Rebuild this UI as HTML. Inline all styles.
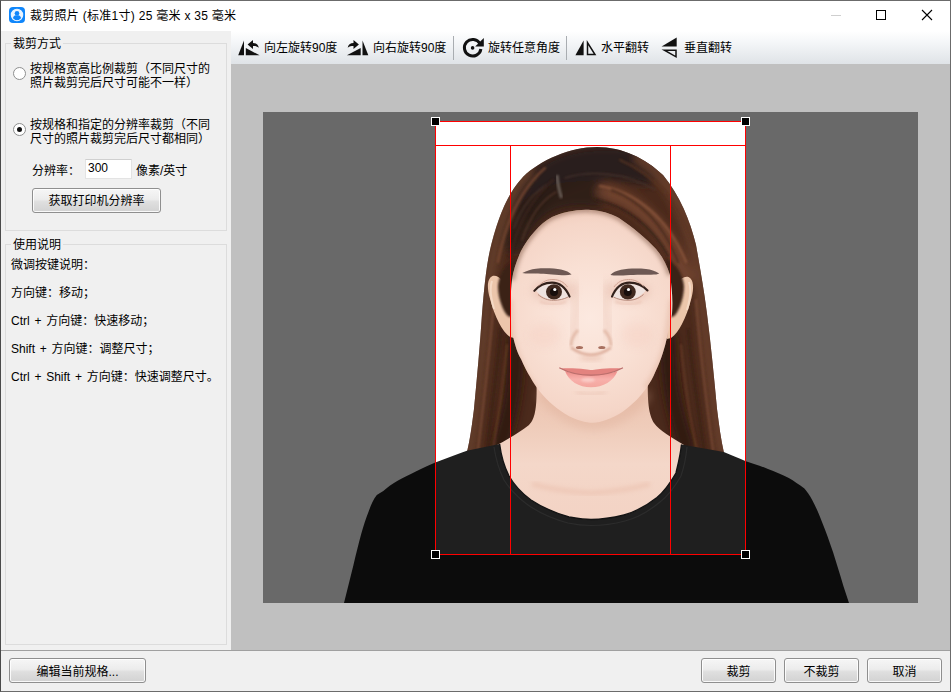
<!DOCTYPE html>
<html lang="zh-CN">
<head>
<meta charset="utf-8">
<title>裁剪照片</title>
<style>
*{box-sizing:border-box;margin:0;padding:0}
html,body{width:951px;height:692px;overflow:hidden;background:#f0f0f0}
body{position:relative;font-family:"Liberation Sans","Noto Sans CJK SC",sans-serif;font-size:12px;color:#000;line-height:14px}
.abs{position:absolute}
#win{position:absolute;left:0;top:0;width:951px;height:692px;border:1px solid #6b6b6b;border-left-color:#4a4a4a;pointer-events:none;z-index:50}
#title{position:absolute;left:1px;top:1px;width:949px;height:30px;background:#fff}
#title .t{position:absolute;left:29px;top:7px;font-size:12px;line-height:16px;white-space:nowrap;letter-spacing:0.28px}
#left{position:absolute;left:1px;top:31px;width:230px;height:619px;background:#f0f0f0}
.gb{position:absolute;border:1px solid #dcdcdc}
.lg{position:absolute;background:#f0f0f0;padding:0 2px;white-space:nowrap;line-height:14px;margin-top:1px}
.radio{position:absolute;width:13px;height:13px;border-radius:50%;border:1px solid #8e8f8f;background:#fff}
.radio.on::after{content:"";position:absolute;left:3px;top:3px;width:5px;height:5px;border-radius:50%;background:#111}
.lbl{position:absolute;white-space:nowrap;line-height:14px;margin-top:1px}
.btn{position:absolute;border:1px solid #8f8f8f;border-radius:3px;background:linear-gradient(#f6f6f6 0%,#ececec 45%,#dfdfdf 55%,#d2d2d2 100%);text-align:center;white-space:nowrap;padding-top:1px;box-shadow:inset 0 0 0 1px rgba(255,255,255,.85)}
#tb{position:absolute;left:231px;top:31px;width:719px;height:33px;background:linear-gradient(#ffffff 0%,#f4f6f8 35%,#dfe3e7 100%)}
#tb .ti{position:absolute;top:10px;line-height:14px;white-space:nowrap}
#tb .sep{position:absolute;top:5px;width:1px;height:24px;background:#a9adb1}
#canvas{position:absolute;left:231px;top:64px;width:719px;height:586px;background:#c0c0c0}
#bottom .btn{padding-top:2px}
#bottom{position:absolute;left:1px;top:650px;width:949px;height:41px;background:#f0f0f0;border-top:1px solid #a0a0a0}
</style>
</head>
<body>
<div id="title">
  <svg class="abs" style="left:8px;top:6px" width="16" height="16" viewBox="0 0 16 16">
    <rect x="0" y="0" width="16" height="16" rx="4" fill="#0f86fb"/>
    <circle cx="8" cy="8" r="5.700" fill="#eaf4ff"/>
    <circle cx="8" cy="6.300" r="2.300" fill="#1186fb"/>
    <path d="M3.900 11.200C4.300 8.700 6 8.300 8 8.300C10 8.300 11.700 8.700 12.100 11.200C11 12.600 9.600 13.200 8 13.200C6.400 13.200 5 12.600 3.900 11.200Z" fill="#1186fb"/>
    <circle cx="8" cy="8" r="5.700" fill="none" stroke="#eaf4ff" stroke-width="1.100"/>
  </svg>
  <div class="t">裁剪照片 (标准1寸) 25 毫米 x 35 毫米</div>
  <svg class="abs" style="left:820px;top:0" width="130" height="30" viewBox="0 0 130 30">
    <path d="M10 14.5H20" stroke="#cfcfcf" stroke-width="1"/>
    <rect x="55.5" y="9.5" width="9" height="9" fill="none" stroke="#000" stroke-width="1"/>
    <path d="M101 9L111 19M111 9L101 19" stroke="#000" stroke-width="1.1"/>
  </svg>
</div>

<div id="left">
  <div class="gb" style="left:4px;top:12px;width:222px;height:188px"></div>
  <div class="lg" style="left:10px;top:5px">裁剪方式</div>
  <div class="radio" style="left:12px;top:36px"></div>
  <div class="lbl" style="left:29px;top:30px">按规格宽高比例裁剪（不同尺寸的<br>照片裁剪完后尺寸可能不一样）</div>
  <div class="radio on" style="left:12px;top:92px"></div>
  <div class="lbl" style="left:29px;top:86px">按规格和指定的分辨率裁剪（不同<br>尺寸的照片裁剪完后尺寸都相同）</div>
  <div class="lbl" style="left:31px;top:132px">分辨率：</div>
  <div class="abs" style="left:84px;top:128px;width:47px;height:20px;background:#fff;border:1px solid #e3e3e3;border-top-color:#d0d0d0"></div>
  <div class="lbl" style="left:87px;top:129px">300</div>
  <div class="lbl" style="left:135px;top:132px">像素/英寸</div>
  <div class="btn" style="left:31px;top:157px;width:129px;height:25px;line-height:23px">获取打印机分辨率</div>

  <div class="gb" style="left:4px;top:213px;width:222px;height:401px"></div>
  <div class="lg" style="left:10px;top:206px">使用说明</div>
  <div class="lbl" style="left:10px;top:226px">微调按键说明：</div>
  <div class="lbl" style="left:10px;top:254px">方向键：移动；</div>
  <div class="lbl" style="word-spacing:1.4px;left:10px;top:282px">Ctrl + 方向键：快速移动；</div>
  <div class="lbl" style="word-spacing:1.4px;left:10px;top:310px">Shift + 方向键：调整尺寸；</div>
  <div class="lbl" style="word-spacing:1.4px;left:10px;top:338px">Ctrl + Shift + 方向键：快速调整尺寸。</div>
</div>

<div id="tb">
  <!-- icons -->
  <svg class="abs" style="left:0;top:0" width="719" height="33" viewBox="231 31 719 33">
    <g fill="#111">
      <path d="M244 40.4L244 55.3L238.2 55.3Z"/>
      <path d="M245.8 48L245.8 55.3L259.6 55.3Z"/>
      <path d="M247.6 44.5L253 40.1L253 43C256.200 43 258.400 44.800 258.800 47.800C257 46.200 255.200 46 253 46L253 48.900Z"/>
    </g>
    <g fill="#111" transform="translate(606.5 0) scale(-1 1)">
      <path d="M244 40.4L244 55.3L238.2 55.3Z"/>
      <path d="M245.8 48L245.8 55.3L259.6 55.3Z"/>
      <path d="M247.6 44.5L253 40.1L253 43C256.200 43 258.400 44.800 258.800 47.800C257 46.200 255.200 46 253 46L253 48.900Z"/>
    </g>
    <g>
      <path d="M479.900 43.600A8.300 8.300 0 1 0 480.900 49" fill="none" stroke="#111" stroke-width="3"/>
      <path d="M483.800 38L483.800 46.600L475.200 46.600Z" fill="#111"/>
      <circle cx="472.600" cy="47.900" r="1.800" fill="#111"/>
    </g>
    <g>
      <path d="M583.600 40.600L583.600 55.300L575.400 55.300Z" fill="#111"/>
      <path d="M587.500 42.600L587.500 54.600L595 54.600Z" fill="none" stroke="#111" stroke-width="1.500"/>
    </g>
    <g>
      <path d="M676.700 37.400L676.700 46.400L661.600 46.400Z" fill="#111"/>
      <path d="M676 50.200L676 56.800L664.400 50.200Z" fill="none" stroke="#111" stroke-width="1.500"/>
    </g>
  </svg>
  <div class="ti" style="left:33px">向左旋转90度</div>
  <div class="ti" style="left:142px">向右旋转90度</div>
  <div class="sep" style="left:222px"></div>
  <div class="ti" style="left:257px">旋转任意角度</div>
  <div class="sep" style="left:335px"></div>
  <div class="ti" style="left:370px">水平翻转</div>
  <div class="ti" style="left:453px">垂直翻转</div>
</div>

<div id="canvas"></div>
<!--PHOTO_START-->
<svg id="photo" class="abs" style="left:263px;top:112px" width="655" height="491" viewBox="263 112 655 491">
  <defs>
    <radialGradient id="gSkin" cx="590" cy="318" r="118" gradientUnits="userSpaceOnUse">
      <stop offset="0" stop-color="#fce9e0"/>
      <stop offset="0.45" stop-color="#f9e0d4"/>
      <stop offset="0.8" stop-color="#f5d6c8"/>
      <stop offset="1" stop-color="#efc9b8"/>
    </radialGradient>
    <linearGradient id="gNeck" x1="0" y1="396" x2="0" y2="520" gradientUnits="userSpaceOnUse">
      <stop offset="0" stop-color="#ecc5b2"/>
      <stop offset="0.25" stop-color="#efccba"/>
      <stop offset="0.55" stop-color="#f4d7c9"/>
      <stop offset="1" stop-color="#f3d3c4"/>
    </linearGradient>
    <linearGradient id="gHair" x1="470" y1="0" x2="724" y2="0" gradientUnits="userSpaceOnUse">
      <stop offset="0" stop-color="#6b3d2a"/>
      <stop offset="0.1" stop-color="#5a3323"/>
      <stop offset="0.22" stop-color="#3a2319"/>
      <stop offset="0.5" stop-color="#2e1d17"/>
      <stop offset="0.78" stop-color="#3f2519"/>
      <stop offset="0.9" stop-color="#5e3524"/>
      <stop offset="1" stop-color="#6e3f2b"/>
    </linearGradient>
    <radialGradient id="gTop" cx="575" cy="190" r="75" gradientUnits="userSpaceOnUse" gradientTransform="translate(575 190) scale(1 0.62) translate(-575 -190)">
      <stop offset="0" stop-color="#2a2220" stop-opacity="1"/>
      <stop offset="0.6" stop-color="#2c1f1b" stop-opacity="0.85"/>
      <stop offset="1" stop-color="#3a2319" stop-opacity="0"/>
    </radialGradient>
    <linearGradient id="gLip" x1="0" y1="372" x2="0" y2="388" gradientUnits="userSpaceOnUse">
      <stop offset="0" stop-color="#ee908c"/>
      <stop offset="0.45" stop-color="#f8b0ab"/>
      <stop offset="1" stop-color="#f3a59d"/>
    </linearGradient>
    <filter id="b05" x="-20%" y="-20%" width="140%" height="140%"><feGaussianBlur stdDeviation="0.5"/></filter>
    <filter id="b1" x="-20%" y="-20%" width="140%" height="140%"><feGaussianBlur stdDeviation="1"/></filter>
    <filter id="b2" x="-30%" y="-30%" width="160%" height="160%"><feGaussianBlur stdDeviation="2"/></filter>
    <filter id="b4" x="-40%" y="-40%" width="180%" height="180%"><feGaussianBlur stdDeviation="4"/></filter>
    <clipPath id="cHair"><path d="M597 147C570 147 540 160 523 177C505 196 496 225 490 250C486 268 484 290 482 314C480 345 477 377 474 409C472 425 470 440 467 452L500 470L690 470L724 453C721 440 719 425 717 409C714 377 711 345 707 314C704 290 700 268 696 245C690 220 680 196 663 175C645 158 622 147 597 147Z"/></clipPath>
    <clipPath id="cFace"><path id="pFace" d="M591 210C578 209 563 212 552 217C540 223 528 238 521 251C516 262 513 272 512 280C510.500 292 510.500 305 510.500 314L513 336C515 346 518 354 521 359C524 366 527 372 530.500 377.500C533 382 535 385 538 389C541 393 545 398 549.500 402C554 406 559 410 564.500 413.500C570 417 576 419.500 581.500 421C585 422 589 422.800 593 422.800C597 422.800 602 421.500 606 420C612 418 618 415 623 411.500C628 408 632 404 636.500 400C640 396.500 643 392.500 646 388.500C650 383 653 377.500 655.500 371.500C658.500 365 661 359 663 352.500C664.500 347.500 666 342.500 667 337.500L672 314C673 300 672 288 670 275C667 265 662 256 656 249C646 238 632 227 619 218C610 213 600 210.500 591 210Z"/></clipPath>
  </defs>
  <rect x="263" y="112" width="655" height="491" fill="#ffffff"/>

  <!-- hair back -->
  <g filter="url(#b05)">
    <path d="M597 147C570 147 540 160 523 177C505 196 496 225 490 250C486 268 484 290 482 314C480 345 477 377 474 409C472 425 470 440 467 452L500 470L690 470L724 453C721 440 719 425 717 409C714 377 711 345 707 314C704 290 700 268 696 245C690 220 680 196 663 175C645 158 622 147 597 147Z" fill="#4b2b1f"/>
  </g>
  <g clip-path="url(#cHair)">
    <g filter="url(#b4)" fill="none" stroke-linecap="round">
      <!-- dark crown -->
      <path d="M528 205C545 168 590 156 645 168" stroke="#271d1b" stroke-width="34" opacity="0.95"/>
      <path d="M515 240C525 205 555 190 595 195" stroke="#2b1d19" stroke-width="26" opacity="0.9"/>
      <!-- outer brown bands -->
      <path d="M528 172C505 195 494 240 488 290C484 340 478 400 470 452" stroke="#67402c" stroke-width="11" opacity="0.9"/>
      <path d="M640 158C672 178 692 225 700 280C706 335 712 400 722 452" stroke="#6a412d" stroke-width="12" opacity="0.9"/>
      <path d="M604 192C638 200 668 230 686 278" stroke="#7a4a33" stroke-width="15" opacity="0.8"/>
      <!-- inner dark near neck -->
      <path d="M516 340C516 380 512 410 500 446" stroke="#2c1812" stroke-width="16" opacity="0.9"/>
      <path d="M668 340C668 380 674 410 686 446" stroke="#2c1812" stroke-width="16" opacity="0.9"/>
    </g>
    <g filter="url(#b1)" fill="none" stroke-linecap="round" opacity="0.8">
      <path d="M494 300C490 350 484 400 478 450" stroke="#7f4e37" stroke-width="2"/>
      <path d="M501 330C497 370 492 410 487 450" stroke="#3b2218" stroke-width="2.500"/>
      <path d="M507 345C503 385 498 420 493 450" stroke="#6b3f2b" stroke-width="2"/>
      <path d="M696 300C700 350 706 400 713 450" stroke="#7f4e37" stroke-width="2"/>
      <path d="M688 330C692 370 698 410 704 450" stroke="#3b2218" stroke-width="2.500"/>
      <path d="M681 345C685 385 690 420 697 450" stroke="#6b3f2b" stroke-width="2"/>
      <path d="M600 186C636 192 668 218 686 262" stroke="#8b563c" stroke-width="2.500"/>
      <path d="M596 200C626 206 652 226 668 256" stroke="#2e1d17" stroke-width="2"/>
      <path d="M565 178C590 170 625 172 655 190" stroke="#4a352e" stroke-width="1.500"/>
      <path d="M552 182C535 190 522 206 514 228" stroke="#4a352e" stroke-width="1.500"/>
      <path d="M556 192C542 200 530 216 522 240" stroke="#57392c" stroke-width="1.500"/>
      <path d="M612 190C640 200 664 225 678 262" stroke="#4a2b1f" stroke-width="2.500"/>
      <path d="M620 160C655 175 680 205 694 245" stroke="#5a3423" stroke-width="2"/>
      <path d="M545 168C520 190 505 225 498 262" stroke="#7b4a33" stroke-width="2.500"/>
      <path d="M553 180C530 200 516 228 510 258" stroke="#3a241c" stroke-width="2.500"/>
    </g>
    <!-- parting scalp -->
    <path d="M557 175C557.500 183 559 190 561.500 198" stroke="#7d726a" stroke-width="3.200" fill="none" filter="url(#b1)" opacity="0.7"/>
  </g>

  <!-- neck -->
  <path d="M536 370C538 408 535 419 529 425C519 433 506 440 497 445L497 480L520 505L560 522L590 526L625 522L662 505L684 480L684 445C672 438 659 430 654 423C649 414 647 405 648 370Z" fill="url(#gNeck)"/>
  <!-- chin shadow on neck -->
  <path d="M538 398C552 418 575 430 594 430C613 430 636 418 650 398L650 392L538 392Z" fill="#dcab94" opacity="0.35" filter="url(#b4)"/>
  <!-- collarbone hint -->
  <path d="M532 484C550 489 572 492 591 493C610 492 632 489 650 484" fill="none" stroke="#e9bca9" stroke-width="5" filter="url(#b2)" opacity="0.5"/>

  <!-- shirt -->
  <path d="M468 450.500L470.400 449.500C458 454 447 458 435.300 462.500C428 465.500 422 468.500 415.800 471.600C409 475 403 478 397.600 480.700C392 484 387 487.500 383.300 491C381 492.500 379 493.500 376.800 495C373 500 371 505 369 510.600C366 518 363.500 526 361.200 534C358.500 544 356 554 353.400 565.200L344 603L849 603L843.400 586C840 574 836 562 833 552C829.500 542 826 532 822.600 523.600C819 514 816 507 812.200 500C810 495.500 807 491.500 804.400 488.500C799 484.500 794 481 788.800 478C782 474.500 775 471.800 768 469C761 466 753 463.500 745.900 461.200C738 458 731 455 723.800 452L681.500 444.500C680 458 677 468 676 473C668 487 660 495 657 497.500C645 507 635 512 624 515C612 518 600 519.500 591 519.500C583 519.500 575 518 569 517C555 513 540 506 531 500C520 492 513 483 509 476C504 466 501 455 499.600 444Z" fill="#1f1f1f"/>
  <!-- collar band -->
  <path d="M494 447C496 460 499 470 504 480C509 488 517 497 528 505C538 512 553 519 568 523C575 524.500 583 525.500 591 525.500C600 525.500 612 524.500 625 521C637 518 648 512 660 502C664 499 673 490 681 476C683 470 686 458 687 447" fill="none" stroke="#2c2c2c" stroke-width="1.2"/>
  <path d="M499.600 444C501 455 504 466 509 476C513 483 520 492 531 500C540 506 555 513 569 517C575 518 583 519.500 591 519.500C600 519.500 612 518 624 515C635 512 645 507 657 497.500C660 495 668 487 676 473C677 468 680 458 681.500 444.500" fill="none" stroke="#141414" stroke-width="1.4"/>

  <!-- ears -->
  <path d="M513 300C509 286 499 273.500 492.500 276C487 278.500 487 288 489.500 297C492 307 495.500 316 499 323C502 329 506 334 510 337L514 338Z" fill="#ecc6ab"/>
  <path d="M492 281C489.500 288 491 299 494 309" fill="none" stroke="#f6dcc8" stroke-width="2" filter="url(#b05)" opacity="0.9"/>
  <path d="M668.500 300C672.500 286 682 274.500 688.500 277C694 279.500 694 289 691.500 298C689 308 685.500 317 682 324C679 330 675 335 671 338L667 339Z" fill="#ecc6ab"/>
  <path d="M689 282C691.500 289 690 300 687 310" fill="none" stroke="#f6dcc8" stroke-width="2" filter="url(#b05)" opacity="0.9"/>
  <!-- sideburn hair over ear -->
  <path d="M516 258C506 264 499 274 498 286C498 296 501 306 506 314C509 318 512 318 513 314L514 290Z" fill="#3a2219" filter="url(#b1)"/>
  <path d="M666 258C676 264 683 274 684 286C684 296 681 306 676 314C673 318 670 318 669 314L668 290Z" fill="#3a2219" filter="url(#b1)"/>

  <!-- face -->
  <g filter="url(#b05)"><use href="#pFace" fill="url(#gSkin)"/></g>
  <g clip-path="url(#cFace)">
    <!-- forehead hairline soft shadow -->
    <path d="M591 210C578 209 563 212 552 217C540 223 528 238 521 251C516 262 513 272 512 280" fill="none" stroke="#7a5443" stroke-width="5" opacity="0.55" filter="url(#b2)"/>
    <path d="M591 210C600 210.500 610 213 619 218C632 227 646 238 656 249C662 256 667 265 670 275" fill="none" stroke="#7a5443" stroke-width="5" opacity="0.55" filter="url(#b2)"/>
    <!-- side face shading -->
    <path d="M510 300L512 336C516 356 524 374 536 390" fill="none" stroke="#e0b09a" stroke-width="6" opacity="0.4" filter="url(#b2)"/>
    <path d="M672 300L667 337C664 356 656 374 646 388" fill="none" stroke="#e0b09a" stroke-width="6" opacity="0.4" filter="url(#b2)"/>
    <!-- nose highlight & shadow -->
    <path d="M590.500 285L590.500 342" stroke="#fff3ec" stroke-width="6" opacity="0.6" filter="url(#b4)"/>
    <path d="M571 346C571 338 575 333 578 330" fill="none" stroke="#dcae9a" stroke-width="3" opacity="0.75" filter="url(#b1)"/>
    <path d="M611 346C611 338 607 333 604 330" fill="none" stroke="#dcae9a" stroke-width="3" opacity="0.75" filter="url(#b1)"/>
    <path d="M571 347.500C577 352 584 354.500 591 355C598 354.500 605 352 611 347.500" fill="none" stroke="#d49f8a" stroke-width="2.400" opacity="0.8" filter="url(#b1)"/>
    <ellipse cx="591" cy="358" rx="12" ry="3" fill="#e8bfae" opacity="0.6" filter="url(#b2)"/>
    <ellipse cx="579.500" cy="347.500" rx="3.600" ry="1.600" fill="#a8705f" filter="url(#b05)"/>
    <ellipse cx="601.800" cy="347.500" rx="3.600" ry="1.600" fill="#a8705f" filter="url(#b05)"/>
    <!-- eye sockets -->
    <ellipse cx="553" cy="291" rx="21" ry="11" fill="#e3b6a5" opacity="0.55" filter="url(#b4)"/>
    <ellipse cx="629" cy="291" rx="21" ry="11" fill="#e3b6a5" opacity="0.55" filter="url(#b4)"/>
    <path d="M575 282C578 300 577 320 572 338" fill="none" stroke="#e6bcab" stroke-width="6" opacity="0.5" filter="url(#b4)"/>
    <path d="M607 282C604 300 605 320 610 338" fill="none" stroke="#e6bcab" stroke-width="6" opacity="0.5" filter="url(#b4)"/>
    <ellipse cx="545" cy="335" rx="16" ry="12" fill="#f4c9bc" opacity="0.3" filter="url(#b4)"/>
    <ellipse cx="637" cy="335" rx="16" ry="12" fill="#f4c9bc" opacity="0.3" filter="url(#b4)"/>
    <!-- chin under-lip shadow -->
    <path d="M576 392C584 395 598 395 606 392" fill="none" stroke="#e9c1b1" stroke-width="3" opacity="0.6" filter="url(#b2)"/>
  </g>

  <!-- eyebrows -->
  <g fill="#604c47" filter="url(#b05)" opacity="0.9">
    <path d="M522.300 273C527 270.500 531 269.200 536 268.700C545 268 555 268.400 561 269.500C566 270.600 569.500 272.300 571.600 274.600C566 275.800 560 275 552 274.500C545 274 536 273.600 531 273.600C527 273.600 524 273.600 522.300 273Z"/>
    <path d="M659.200 273.600C655 270.800 651 269.600 646 269C638 268.200 628 268.400 621 269.700C616 270.700 612.500 272.600 610.400 275C616 276 622 275.300 630 274.900C637 274.600 646 274.600 651 274.700C655 274.700 658 274.500 659.200 273.600Z"/>
  </g>

  <!-- eyes -->
  <g>
    <!-- left eye -->
    <path d="M536 290.500C540 286 546 283.800 552 283.800C559 283.800 565 288 569 296.500C564 299 558 299.800 553 299.600C546 299.200 540 296 536 290.500Z" fill="#efe3df"/>
    <ellipse cx="554" cy="291.800" rx="8" ry="7.600" fill="#40291f"/>
    <ellipse cx="554" cy="292" rx="4" ry="3.900" fill="#170e0c"/>
    <path d="M534.300 290.800C539 285 546 282.600 552 282.600C559.500 282.600 565.500 287 569.600 296.600" fill="none" stroke="#33211b" stroke-width="2.100" stroke-linecap="round" filter="url(#b05)"/>
    <path d="M538 294.500C543 298.800 548 300.300 553.500 300.300C559 300.300 564 299.200 568 297" fill="none" stroke="#a87a6b" stroke-width="1" opacity="0.8" filter="url(#b05)"/>
    <circle cx="554.800" cy="289.500" r="1.600" fill="#ffffff"/>
    <!-- right eye -->
    <path d="M646 290.300C641.500 286 635.500 283.800 629.500 283.800C622.500 283.800 616.500 288 612.500 296.500C617.500 299 623.500 299.800 628.500 299.600C635.500 299.200 641.500 296 646 290.300Z" fill="#efe3df"/>
    <ellipse cx="627.800" cy="291.800" rx="8" ry="7.600" fill="#40291f"/>
    <ellipse cx="627.800" cy="292" rx="4" ry="3.900" fill="#170e0c"/>
    <path d="M647.500 290.500C642.500 285 635.500 282.600 629.500 282.600C622 282.600 616 287 612 296.600" fill="none" stroke="#33211b" stroke-width="2.100" stroke-linecap="round" filter="url(#b05)"/>
    <path d="M643.500 294.500C638.500 298.800 633.500 300.300 628 300.300C622.500 300.300 617.500 299.200 613.500 297" fill="none" stroke="#a87a6b" stroke-width="1" opacity="0.8" filter="url(#b05)"/>
    <circle cx="628.500" cy="289.500" r="1.600" fill="#ffffff"/>
    <!-- upper lid crease -->
    <path d="M538 286.500C543 281 548 279.500 553 279.500C559 279.500 564 282 567.500 287" fill="none" stroke="#c79786" stroke-width="1" opacity="0.8" filter="url(#b05)"/>
    <path d="M643.500 286.500C638.500 281 633.500 279.500 628.500 279.500C622.500 279.500 617.500 282 614 287" fill="none" stroke="#c79786" stroke-width="1" opacity="0.8" filter="url(#b05)"/>
    <!-- under-eye -->
    <path d="M540 301.500C546 305 560 305 566 301.500" fill="none" stroke="#e9c0b0" stroke-width="2" opacity="0.7" filter="url(#b1)"/>
    <path d="M641.500 301.500C635.500 305 621.500 305 615.500 301.500" fill="none" stroke="#e9c0b0" stroke-width="2" opacity="0.7" filter="url(#b1)"/>
  </g>

  <!-- mouth -->
  <g>
    <path d="M565 371C575 375.500 607 375.500 617.500 371C614 381 603 387.300 591 387.300C579 387.300 568.500 381 565 371Z" fill="url(#gLip)" filter="url(#b05)"/>
    <path d="M561 368.600C568 368 578 368.500 585 369.300C588 369.700 590 370 591.500 370C593 370 595 369.700 598 369.300C605 368.500 614 368 621.500 368.600C613 373.300 601 375.800 591 375.800C581 375.800 569.500 373.300 561 368.600Z" fill="#e3837f" filter="url(#b05)"/>
    <path d="M559.800 368C569 373 580 375.200 591 375.200C602 375.200 613 373 622.500 368" fill="none" stroke="#bb6f6d" stroke-width="1.300" stroke-linecap="round" filter="url(#b05)"/>
    <ellipse cx="588" cy="380" rx="7" ry="2.200" fill="#fbd3ce" opacity="0.8" filter="url(#b1)"/>
  </g>

  <!-- dim overlay outside crop -->
  <path d="M263 112H918V603H263ZM435 121V555H746V121Z" fill="#000" fill-opacity="0.588" fill-rule="evenodd"/>

  <!-- crop lines -->
  <g fill="none" stroke="#ff0000" stroke-width="1" shape-rendering="crispEdges">
    <rect x="435.500" y="121.500" width="310" height="433"/>
    <path d="M435 145.500H746M510.500 145V554M670.500 145V554"/>
  </g>
  <g fill="#000" stroke="#fff" stroke-width="1" shape-rendering="crispEdges">
    <rect x="431.500" y="117.500" width="8" height="8"/>
    <rect x="741.500" y="117.500" width="8" height="8"/>
    <rect x="431.500" y="550.500" width="8" height="8"/>
    <rect x="741.500" y="550.500" width="8" height="8"/>
  </g>
</svg>
<!--PHOTO_END-->

<div id="bottom">
  <div class="btn" style="left:8px;top:7px;width:137px;height:25px;line-height:23px">编辑当前规格...</div>
  <div class="btn" style="left:700px;top:7px;width:75px;height:25px;line-height:23px">裁剪</div>
  <div class="btn" style="left:783px;top:7px;width:75px;height:25px;line-height:23px">不裁剪</div>
  <div class="btn" style="left:866px;top:7px;width:75px;height:25px;line-height:23px">取消</div>
</div>
<div id="win"></div>
</body>
</html>
